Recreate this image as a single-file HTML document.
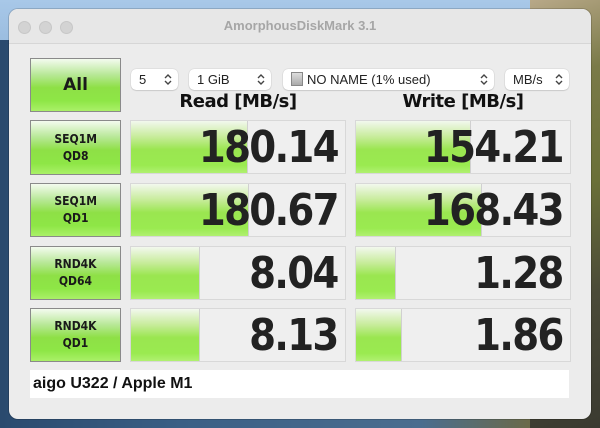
<!DOCTYPE html>
<html><head><meta charset="utf-8"><style>
*{box-sizing:border-box;margin:0;padding:0}
body{width:600px;height:428px;overflow:hidden;position:relative;font-family:"Liberation Sans",sans-serif;
background:linear-gradient(90deg,#2a4a6e 0%,#3a5f85 30%,#4a6d8f 70%,#6a6a4a 88%,#5d6a3a 100%);}
.sky{position:absolute;left:0;top:0;width:600px;height:40px;background:linear-gradient(#a8c8e8,#9bbde0);}
.rock{position:absolute;right:0;top:0;width:70px;height:428px;background:linear-gradient(160deg,#b8a888 0%,#7a7a48 20%,#6a7038 45%,#4a4a38 70%,#3a3a30 100%);}
.win{position:absolute;left:9px;top:9px;width:582px;height:410px;background:#ececec;border-radius:9px;overflow:hidden;box-shadow:0 0 0 1px rgba(0,0,0,.15)}
.tb{height:35px;background:#e7e7e7;border-bottom:1px solid #d6d6d6;text-align:center;font-weight:bold;color:#a6a6a6;font-size:13px;line-height:34px}
.dot{position:absolute;top:12px;width:13px;height:13px;border-radius:50%;background:#d3d3d3;border:1px solid #c7c7c7}
.btn{position:absolute;border:1px solid #8a8a8a;background:linear-gradient(#f4fbef 0%,#b8e898 30%,#8ee046 55%,#8ee646 80%,#aaf068 100%);display:flex;align-items:center;justify-content:center;text-align:center;font-weight:bold;color:#1a1a1a;font-size:12px;line-height:17px;font-family:"DejaVu Sans",sans-serif}
.btn span{display:inline-block;transform:scaleX(.9)}
.sel{position:absolute;top:60px;height:21px;background:#fff;border-radius:5px;box-shadow:0 0 1px rgba(0,0,0,.3),0 1px 1px rgba(0,0,0,.1);font-size:13px;color:#222;line-height:21px;padding-left:8px}
.sel svg{position:absolute;right:6px;top:5px}
.h{position:absolute;top:82px;font-weight:bold;font-size:18px;color:#111;text-align:center;width:216px;font-family:"DejaVu Sans",sans-serif;letter-spacing:-0.5px}
.cell{position:absolute;height:54px;border:1px solid #d8d8d8;background:#efefef}
.cell .g{position:absolute;left:0;top:0;bottom:0;background:linear-gradient(#f2f8ee 0%,#c8ec9c 30%,#9ae650 55%,#9aea50 85%,#b0f070 100%);border-right:1px solid #d0d0d0}
.cell .n{position:absolute;right:7px;top:2px;font-weight:bold;font-size:44px;color:#222;line-height:50px;font-family:"DejaVu Sans",sans-serif;letter-spacing:-2px;transform:scaleX(.88);transform-origin:right center}
.foot{position:absolute;left:21px;top:361px;width:539px;height:28px;background:#fff;font-weight:bold;font-size:16px;line-height:28px;padding-left:3px;color:#111}
</style></head><body>
<div class="sky"></div><div class="rock"></div>
<div class="win">
<div class="tb">AmorphousDiskMark 3.1</div>
<div class="dot" style="left:9px"></div><div class="dot" style="left:30px"></div><div class="dot" style="left:51px"></div>
<div class="btn" style="left:21px;top:49px;width:91px;height:54px;font-size:17px">All</div>
<div class="sel" style="left:122px;width:47px">5<svg width="8" height="11" viewBox="0 0 8 11"><path d="M1 4L4 1L7 4M1 7L4 10L7 7" fill="none" stroke="#444" stroke-width="1.4"/></svg></div>
<div class="sel" style="left:180px;width:82px">1 GiB<svg width="8" height="11" viewBox="0 0 8 11"><path d="M1 4L4 1L7 4M1 7L4 10L7 7" fill="none" stroke="#444" stroke-width="1.4"/></svg></div>
<div class="sel" style="left:274px;width:211px"><span style="display:inline-block;width:12px;height:14px;background:linear-gradient(#ddd,#aaa);border:1px solid #888;vertical-align:-2px;margin-right:4px"></span>NO NAME (1% used)<svg width="8" height="11" viewBox="0 0 8 11"><path d="M1 4L4 1L7 4M1 7L4 10L7 7" fill="none" stroke="#444" stroke-width="1.4"/></svg></div>
<div class="sel" style="left:496px;width:64px">MB/s<svg width="8" height="11" viewBox="0 0 8 11"><path d="M1 4L4 1L7 4M1 7L4 10L7 7" fill="none" stroke="#444" stroke-width="1.4"/></svg></div>
<div class="h" style="left:121px">Read [MB/s]</div>
<div class="h" style="left:346px">Write [MB/s]</div>

<div class="btn" style="left:21px;top:111px;width:91px;height:55px"><span>SEQ1M<br>QD8</span></div>
<div class="cell" style="left:121px;top:111px;width:216px"><div class="g" style="width:117px"></div><div class="n">180.14</div></div>
<div class="cell" style="left:346px;top:111px;width:216px"><div class="g" style="width:115px"></div><div class="n">154.21</div></div>

<div class="btn" style="left:21px;top:174px;width:91px;height:54px"><span>SEQ1M<br>QD1</span></div>
<div class="cell" style="left:121px;top:174px;width:216px"><div class="g" style="width:118px"></div><div class="n">180.67</div></div>
<div class="cell" style="left:346px;top:174px;width:216px"><div class="g" style="width:126px"></div><div class="n">168.43</div></div>

<div class="btn" style="left:21px;top:237px;width:91px;height:54px"><span>RND4K<br>QD64</span></div>
<div class="cell" style="left:121px;top:237px;width:216px"><div class="g" style="width:69px"></div><div class="n">8.04</div></div>
<div class="cell" style="left:346px;top:237px;width:216px"><div class="g" style="width:40px"></div><div class="n">1.28</div></div>

<div class="btn" style="left:21px;top:299px;width:91px;height:54px"><span>RND4K<br>QD1</span></div>
<div class="cell" style="left:121px;top:299px;width:216px"><div class="g" style="width:69px"></div><div class="n">8.13</div></div>
<div class="cell" style="left:346px;top:299px;width:216px"><div class="g" style="width:46px"></div><div class="n">1.86</div></div>

<div class="foot">aigo U322 / Apple M1</div>
</div>
</body></html>
